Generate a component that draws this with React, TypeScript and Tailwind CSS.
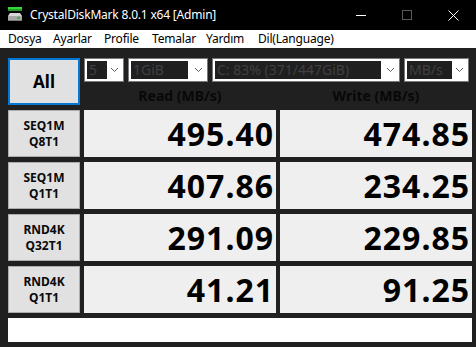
import React from "react";

const font = { fontFamily: '"Noto Sans", "Open Sans", sans-serif' };

function Select({ w, boxW, text }: { w: string; boxW: string; text: string }) {
  return (
    <div className={`${w} h-[24px] bg-white border border-[#7a7a7a] flex items-center pl-[2px] pr-[4px]`}>
      <div className={`${boxW} h-[18px] bg-[#1f1f1f] flex items-center pl-[2px] text-[14px] text-[#404040] leading-none overflow-hidden whitespace-nowrap`}>
        {text}
      </div>
      <div className="flex-1 flex justify-end">
        <svg width="9" height="6" viewBox="0 0 9 6">
          <path d="M1 1 L4.5 4.5 L8 1" stroke="#606060" strokeWidth="1" fill="none" />
        </svg>
      </div>
    </div>
  );
}

function Row({ a, b, read, write }: { a: string; b: string; read: string; write: string }) {
  return (
    <>
      <div className="h-[47px] bg-[#e1e1e1] border border-[#adadad] flex flex-col items-center justify-center text-[12px] font-bold leading-[16px] text-[#0a0a0a]">
        <span>{a}</span>
        <span>{b}</span>
      </div>
      <div className="h-[47px] bg-[#efefef] flex items-center justify-end pr-[2px] text-[32px] font-bold text-black leading-none tracking-[1px]">
        {read}
      </div>
      <div className="h-[47px] bg-[#efefef] flex items-center justify-end pr-[2px] text-[32px] font-bold text-black leading-none tracking-[1px]">
        {write}
      </div>
    </>
  );
}

export default function App() {
  return (
    <div className="w-[476px] h-[347px] bg-[#202020] flex flex-col overflow-hidden" style={font}>
      <div className="h-[30px] bg-black flex items-center text-white">
        <svg className="ml-[8px]" width="16" height="16" viewBox="0 0 16 16">
          <rect x="0" y="0" width="14" height="2" fill="#3cd23c" />
          <rect x="0" y="2" width="14" height="2" fill="#1f9e1f" />
          <path d="M2 6 L12 6 L14 9 L0 9 Z" fill="#d8d8d8" />
          <rect x="0" y="9" width="14" height="5" fill="#a8a8a8" />
          <rect x="0" y="13" width="14" height="1" fill="#7a7a7a" />
          <rect x="9" y="10" width="3" height="2" fill="#2ec02e" />
        </svg>
        <span className="ml-[6px] text-[12px] tracking-[-0.2px]">CrystalDiskMark 8.0.1 x64 [Admin]</span>
        <div className="flex-1" />
        <div className="w-[46px] h-[30px] flex items-center justify-center">
          <div className="w-[10px] h-[1px] bg-white" />
        </div>
        <div className="w-[46px] h-[30px] flex items-center justify-center">
          <div className="w-[10px] h-[10px] border border-[#5a5a5a]" />
        </div>
        <div className="w-[46px] h-[30px] flex items-center justify-center">
          <svg width="11" height="11" viewBox="0 0 11 11">
            <path d="M0.5 0.5 L10.5 10.5 M10.5 0.5 L0.5 10.5" stroke="white" strokeWidth="1" />
          </svg>
        </div>
      </div>
      <div className="h-[18px] bg-white flex items-center pl-[8px] text-[12px] text-black tracking-[-0.2px]">
        <span className="w-[45px]">Dosya</span>
        <span className="w-[51px]">Ayarlar</span>
        <span className="w-[48px]">Profile</span>
        <span className="w-[54px]">Temalar</span>
        <span className="w-[52px]">Yardım</span>
        <span>Dil(Language)</span>
      </div>
      <div className="pl-[8px] pt-[10px] grid grid-cols-[72px_192px_192px] gap-x-[4px] gap-y-[5px]">
        <div className="h-[47px] bg-[#e1e1e1] border-2 border-[#0078d7] flex items-center justify-center text-[17px] font-bold text-black">
          All
        </div>
        <div className="col-span-2 h-[47px] flex flex-col">
          <div className="flex gap-[4px] h-[24px]">
            <Select w="w-[40px]" boxW="w-[20px]" text="5" />
            <Select w="w-[80px]" boxW="w-[57px]" text="1GiB" />
            <Select w="w-[188px]" boxW="w-[166px]" text="C: 83% (371/447GiB)" />
            <Select w="w-[65px]" boxW="w-[45px]" text="MB/s" />
          </div>
          <div className="h-[23px] grid grid-cols-[192px_192px] gap-x-[4px] items-center text-[14px] font-bold leading-[18px] text-[#080808]">
            <div className="text-center pt-[4px]">Read (MB/s)</div>
            <div className="text-center pt-[4px]">Write (MB/s)</div>
          </div>
        </div>
        <Row a="SEQ1M" b="Q8T1" read="495.40" write="474.85" />
        <Row a="SEQ1M" b="Q1T1" read="407.86" write="234.25" />
        <Row a="RND4K" b="Q32T1" read="291.09" write="229.85" />
        <Row a="RND4K" b="Q1T1" read="41.21" write="91.25" />
        <div className="col-span-3 h-[24px] bg-white" />
      </div>
    </div>
  );
}
